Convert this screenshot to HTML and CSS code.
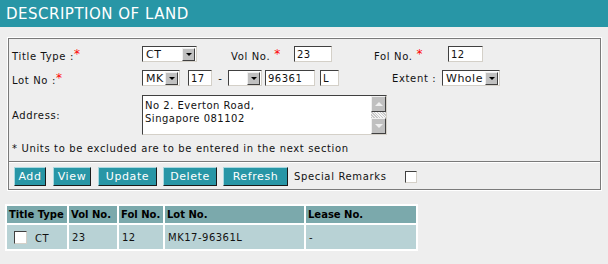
FILE: index.html
```html
<!DOCTYPE html>
<html>
<head>
    <meta charset="utf-8">
    <title>Description of Land</title>
    <link rel="stylesheet" href="styles.css">
</head>
<body>
    <div class="page-header">
        <span class="page-title">DESCRIPTION OF LAND</span>
    </div>

    <div class="land-box">
        <div class="form-section">
            <div class="form-row">
                <span class="label lbl-first">Title Type :<span class="req">*</span></span>
                <span class="dropdown dd-ct"><span class="dd-value">CT</span><span class="dd-btn"></span></span>
                <span class="label lbl-vol">Vol No. <span class="req">*</span></span>
                <input class="field in-vol" value="23">
                <span class="label lbl-fol">Fol No. <span class="req">*</span></span>
                <input class="field in-fol" value="12">
            </div>
            <div class="form-row">
                <span class="label lbl-first">Lot No :<span class="req">*</span></span>
                <span class="dropdown dd-mk"><span class="dd-value">MK</span><span class="dd-btn"></span></span>
                <input class="field in-lot1" value="17">
                <span class="dash">-</span>
                <span class="dropdown dd-blank"><span class="dd-value"></span><span class="dd-btn"></span></span>
                <input class="field in-lot2" value="96361">
                <input class="field in-lot3" value="L">
                <span class="label lbl-extent">Extent :</span>
                <span class="dropdown dd-whole"><span class="dd-value">Whole</span><span class="dd-btn"></span></span>
            </div>
            <div class="form-row address-row">
                <span class="label lbl-first">Address:</span>
                <div class="memo">
                    <div class="memo-text">No 2. Everton Road,<br>Singapore 081102</div>
                    <div class="memo-scroll">
                        <span class="sb-btn"><span class="tri-up"></span></span>
                        <span class="sb-track"></span>
                        <span class="sb-btn"><span class="tri-down"></span></span>
                    </div>
                </div>
            </div>
            <div class="note">* Units to be excluded are to be entered in the next section</div>
        </div>

        <div class="action-section">
            <button class="act-btn btn-add">Add</button>
            <button class="act-btn btn-view">View</button>
            <button class="act-btn btn-update">Update</button>
            <button class="act-btn btn-delete">Delete</button>
            <button class="act-btn btn-refresh">Refresh</button>
            <span class="remarks-label">Special Remarks</span>
            <span class="check"></span>
        </div>
    </div>

    <table class="land-table">
        <thead>
            <tr>
                <th class="col-type">Title Type</th>
                <th class="col-vol">Vol No.</th>
                <th class="col-fol">Fol No.</th>
                <th class="col-lot">Lot No.</th>
                <th class="col-lease">Lease No.</th>
            </tr>
        </thead>
        <tbody>
            <tr>
                <td><span class="check row-check"></span>CT</td>
                <td>23</td>
                <td>12</td>
                <td>MK17-96361L</td>
                <td>-</td>
            </tr>
        </tbody>
    </table>
</body>
</html>
```

FILE: styles.css
```css
* {
    font-family: 'DejaVu Sans', Verdana, sans-serif;
    box-sizing: border-box;
}
body {
    background-color: #eeeeee;
    margin: 0px;
    padding: 0px;
    font-size: 10px;
    color: #111;
}

.page-header {
    background-color: #2896a6;
    height: 27px;
    display: flex;
    align-items: center;
    padding-left: 6px;
}
.page-title {
    color: white;
    font-size: 15px;
    letter-spacing: 0.5px;
}

.land-box {
    margin-top: 11px;
    margin-left: 8px;
    width: 593px;
    border: 1px solid #7a7a7a;
    box-shadow: 0 0 0 1px #fff;
}

.form-section {
    padding: 3px 0px 5px 3px;
    border-bottom: 1px solid #7a7a7a;
}

.form-row {
    display: flex;
    align-items: center;
    height: 24px;
}

.label {
    letter-spacing: 0.65px;
}
.req {
    color: #ff0000;
    font-size: 12px;
    vertical-align: 2px;
}
.lbl-first { width: 130px; }
.lbl-vol { width: 97px; padding-left: 34px; }
.lbl-fol { width: 116px; padding-left: 42px; }
.lbl-extent { width: 103px; padding-left: 53px; }

.field {
    height: 16px;
    border: 1px solid;
    border-color: #404040 #d4d0c8 #d4d0c8 #404040;
    background: white;
    font-size: 10px;
    padding: 0px 2px;
    letter-spacing: 0.5px;
    color: #111;
}
.in-vol { width: 38px; }
.in-fol { width: 35px; }
.in-lot1 { width: 24px; margin-left: 8px; }
.in-lot2 { width: 50px; margin-left: 3px; }
.in-lot3 { width: 19px; margin-left: 5px; }

.dash {
    width: 16px;
    text-align: center;
}

.dropdown {
    display: inline-flex;
    align-items: center;
    height: 16px;
    background: white;
    border: 1px solid;
    border-color: #404040 #d4d0c8 #d4d0c8 #404040;
    padding-left: 3px;
}
.dd-value {
    flex-grow: 1;
    font-size: 11px;
    letter-spacing: 0.5px;
}
.dd-btn {
    width: 13px;
    height: 13px;
    margin-right: 1px;
    background-color: #c0c0c0;
    border: 1px solid;
    border-color: #f0f0f0 #404040 #404040 #f0f0f0;
    display: flex;
    align-items: center;
    justify-content: center;
}
.dd-btn::after {
    content: '';
    border-left: 3px solid transparent;
    border-right: 3px solid transparent;
    border-top: 3px solid #000;
}
.dd-ct { width: 55px; }
.dd-mk { width: 38px; }
.dd-blank { width: 34px; }
.dd-whole { width: 58px; }

.address-row {
    height: 40px;
    margin-top: 5px;
}
.memo {
    width: 245px;
    height: 40px;
    display: flex;
    background: white;
    border: 1px solid;
    border-color: #404040 #d4d0c8 #d4d0c8 #404040;
}
.memo-text {
    flex-grow: 1;
    padding: 3px 2px;
    line-height: 13px;
    font-size: 10px;
    letter-spacing: 0.5px;
}
.memo-scroll {
    width: 15px;
    display: flex;
    flex-direction: column;
}
.sb-btn {
    height: 16px;
    background: #c0c0c0;
    border: 1px solid;
    border-color: #f0f0f0 #404040 #404040 #f0f0f0;
    display: flex;
    align-items: center;
    justify-content: center;
}
.sb-track {
    flex-grow: 1;
    background-color: #e6e6e6;
    background-image: repeating-linear-gradient(45deg, #c8c8c8 0 1px, #f4f4f4 1px 2px);
}
.tri-up {
    border-left: 4px solid transparent;
    border-right: 4px solid transparent;
    border-bottom: 4px solid #f0f0f0;
}
.tri-down {
    border-left: 4px solid transparent;
    border-right: 4px solid transparent;
    border-top: 4px solid #f0f0f0;
}

.note {
    margin-top: 5px;
    height: 16px;
    display: flex;
    align-items: center;
    letter-spacing: 0.65px;
}

.action-section {
    border-top: 1px solid #fff;
    display: flex;
    align-items: center;
    padding: 4px 0px 3px 5px;
    gap: 6px;
}
.act-btn {
    height: 19px;
    background-color: #2896a6;
    color: white;
    font-size: 11px;
    letter-spacing: 0.6px;
    border: 1px solid;
    border-color: #a9d9e0 #1a1a1a #1a1a1a #a9d9e0;
    padding: 0px;
    text-align: center;
}
.btn-add { width: 32px; }
.btn-view { width: 38px; margin-left: 1px; }
.btn-update { width: 59px; margin-left: 1px; }
.btn-delete { width: 54px; }
.btn-refresh { width: 65px; }
.remarks-label {
    margin-left: 0px;
    letter-spacing: 0.65px;
}
.check {
    display: inline-block;
    width: 12px;
    height: 12px;
    margin-left: 12px;
    background: white;
    border: 1px solid;
    border-color: #404040 #d4d0c8 #d4d0c8 #404040;
}

.land-table {
    margin-top: 14px;
    margin-left: 5px;
    background: white;
    border-spacing: 2px;
}
th {
    background-color: #7ba9ac;
    text-align: left;
    font-size: 10px;
    height: 17px;
    padding: 0px 2px;
    color: #000;
}
td {
    background-color: #b8d2d5;
    height: 24px;
    padding: 0px 3px;
    letter-spacing: 0.5px;
}
.col-type { width: 60px; }
.col-vol { width: 48px; }
.col-fol { width: 44px; }
.col-lot { width: 139px; }
.col-lease { width: 110px; }
.row-check {
    margin-left: 4px;
    margin-right: 8px;
    width: 13px;
    height: 13px;
    vertical-align: -2px;
}
```
